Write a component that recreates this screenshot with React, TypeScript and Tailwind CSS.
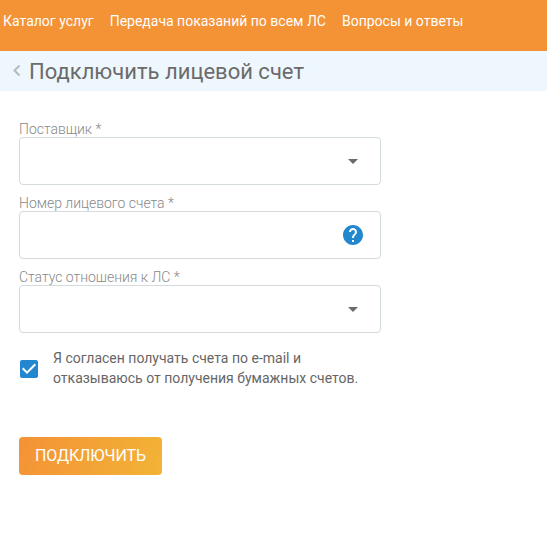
import { FC, ReactNode } from "react"

interface FieldProps {
  label: string
  children?: ReactNode
}

const NAV_ITEMS = [
  "Каталог услуг",
  "Передача показаний по всем ЛС",
  "Вопросы и ответы"
]

const Field: FC<FieldProps> = ({ label, children }) => (
  <div className="h-[74px]">
    <label className="block h-4 text-[14px] leading-4 font-light tracking-[-0.02px] text-[#888]">
      {label}
    </label>
    <div className="flex h-12 w-[362px] items-center justify-end rounded border border-[#d3dbde] bg-white">
      {children}
    </div>
  </div>
)

const SelectArrow: FC = () => (
  <svg className="mr-[15px] size-6" viewBox="0 0 24 24" fill="#6b6b6b">
    <path d="M7 10l5 5 5-5z" />
  </svg>
)

const HelpIcon: FC = () => (
  <svg className="mr-[15px] size-6" viewBox="0 0 24 24" fill="#2387d0">
    <path d="M12 2C6.48 2 2 6.48 2 12s4.48 10 10 10 10-4.48 10-10S17.52 2 12 2zm1 17h-2v-2h2v2zm2.07-7.75l-.9.92C13.45 12.9 13 13.5 13 15h-2v-.5c0-1.1.45-2.1 1.17-2.83l1.24-1.26c.37-.36.59-.86.59-1.41 0-1.1-.9-2-2-2s-2 .9-2 2H8c0-2.21 1.79-4 4-4s4 1.79 4 4c0 .88-.36 1.68-.93 2.25z" />
  </svg>
)

const CheckboxIcon: FC = () => (
  <svg className="mt-0.5 size-6 shrink-0" viewBox="0 0 24 24" fill="#2387d0">
    <path d="M19 3H5c-1.11 0-2 .9-2 2v14c0 1.1.89 2 2 2h14c1.11 0 2-.9 2-2V5c0-1.1-.89-2-2-2zm-9 14l-5-5 1.41-1.41L10 14.17l7.59-7.59L19 8l-9 9z" />
  </svg>
)

export default function App() {
  return (
    <div className="min-h-screen bg-white font-['Roboto','Liberation_Sans',sans-serif]">
      <nav className="flex h-[51px] gap-4 bg-[#f49236] pt-[11px] pl-[3px] text-[14px] leading-5 whitespace-nowrap text-white">
        {NAV_ITEMS.map(item => (
          <a key={item}>{item}</a>
        ))}
      </nav>

      <header className="flex h-10 items-center bg-[#eef7fe] pl-[13px]">
        <svg
          className="mr-2 h-3 w-2"
          viewBox="0 0 8 12"
          fill="none"
          stroke="#b4bbc0"
          strokeWidth="2"
        >
          <path d="M6.5 .5L1.5 5.5l5 5" />
        </svg>
        <h1 className="text-[22px] text-[#6b6b6b]">Подключить лицевой счет</h1>
      </header>

      <main className="pt-[30px] pl-[19px]">
        <Field label="Поставщик *">
          <SelectArrow />
        </Field>
        <Field label="Номер лицевого счета *">
          <HelpIcon />
        </Field>
        <Field label="Статус отношения к ЛС *">
          <SelectArrow />
        </Field>

        <div className="-ml-[2px] flex items-center pt-[5px]">
          <CheckboxIcon />
          <p className="ml-3 text-[14px] leading-5 text-[#666]">
            Я согласен получать счета по e-mail и
            <br />
            отказываюсь от получения бумажных счетов.
          </p>
        </div>

        <button className="mt-[49px] h-[38px] w-[143px] rounded bg-linear-[110deg] from-[#f49236] to-[#f2b436] text-[16px] tracking-[-0.08px] text-white">
          ПОДКЛЮЧИТЬ
        </button>
      </main>
    </div>
  )
}
